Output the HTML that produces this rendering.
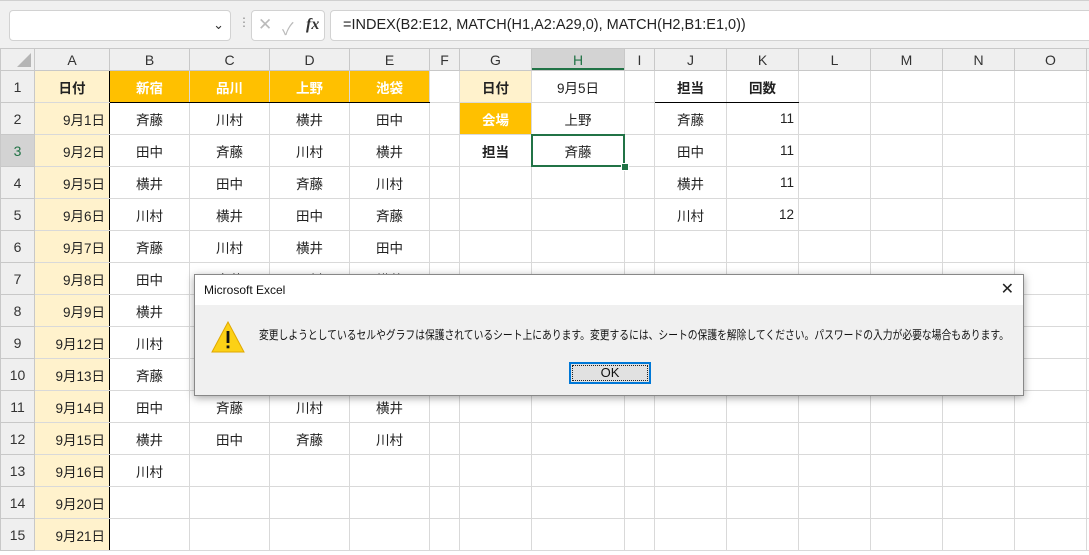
<!DOCTYPE html>
<html><head><meta charset="utf-8"><style>
body{margin:0;width:1089px;height:555px;overflow:hidden;background:#fff;font-family:"Liberation Sans","Noto Sans CJK JP",sans-serif;position:relative}
.top{position:absolute;left:0;top:0;width:1089px;height:48px;background:#f0f0f0;border-top:1px solid #d0d0d0;box-sizing:border-box}
.box{position:absolute;background:#fff;border:1px solid #d2d2d2;border-radius:4px;box-sizing:border-box}
table{position:absolute;left:0;top:48px;width:1106px;border-collapse:collapse;table-layout:fixed;font-size:13.5px;color:#222}
td{border:1px solid #d9d9d9;height:31px;padding:0 4px;text-align:center;white-space:nowrap;overflow:hidden}
tr.h td{height:21px;background:#efefef;color:#333;font-size:14px;border-color:#c8c8c8}
td.r{background:#efefef;color:#333;border-color:#c8c8c8;text-align:center;padding:0;font-size:14px}
.a{background:#fff2cc;text-align:right;padding-right:4px;border-right:1px solid #000}
.o{background:#ffc000;color:#fff;font-weight:bold}
.b{font-weight:bold}
.bb{border-bottom:1px solid #000}
.n{text-align:right}
.dlg{position:absolute;left:194px;top:274px;width:830px;height:122px;background:#f0f0f0;border:1px solid #888;box-shadow:0 2px 8px rgba(0,0,0,.35);box-sizing:border-box;font-size:12px}
</style></head><body>
<div class="top">
<div class="box" style="left:9px;top:9px;width:222px;height:31px"><span style="position:absolute;right:6px;top:6px;font-size:13px;color:#333">&#8964;</span></div>
<div style="position:absolute;left:238px;top:14px;color:#888;font-size:12px">&#8942;</div>
<div class="box" style="left:251px;top:9px;width:74px;height:31px;color:#bbb;font-size:17px"><span style="position:absolute;left:6px;top:4px">&#10005;</span><span style="position:absolute;left:30px;top:4px">&#10003;</span><i style="position:absolute;left:54px;top:5px;color:#333;font-family:'Liberation Serif',serif;font-weight:bold;font-size:16px">fx</i></div>
<div class="box" style="left:330px;top:9px;width:770px;height:31px;border-radius:4px 0 0 4px"><span style="position:absolute;left:12px;top:6px;font-size:14.5px;color:#222">=INDEX(B2:E12, MATCH(H1,A2:A29,0), MATCH(H2,B1:E1,0))</span></div>
</div>
<table>
<colgroup><col style="width:34px"><col style="width:75px"><col style="width:80px"><col style="width:80px"><col style="width:80px"><col style="width:80px"><col style="width:30px"><col style="width:72px"><col style="width:93px"><col style="width:30px"><col style="width:72px"><col style="width:72px"><col style="width:72px"><col style="width:72px"><col style="width:72px"><col style="width:72px"><col style="width:20px"></colgroup>
<tr class="h"><td style="position:relative"><span style="position:absolute;right:3px;bottom:3px;width:0;height:0;border-left:14px solid transparent;border-bottom:14px solid #b5b5b5"></span></td><td>A</td><td>B</td><td>C</td><td>D</td><td>E</td><td>F</td><td>G</td><td style="background:#d3d3d3;box-shadow:inset 0 -2px 0 #217346;color:#217346">H</td><td>I</td><td>J</td><td>K</td><td>L</td><td>M</td><td>N</td><td>O</td><td></td></tr>
<tr><td class="r">1</td><td class="a b" style="text-align:center">日付</td><td class="o bb">新宿</td><td class="o bb">品川</td><td class="o bb">上野</td><td class="o bb">池袋</td><td></td><td class="b" style="background:#fff2cc">日付</td><td>9月5日</td><td></td><td class="b bb">担当</td><td class="b bb">回数</td><td></td><td></td><td></td><td></td><td></td></tr>
<tr><td class="r">2</td><td class="a">9月1日</td><td>斉藤</td><td>川村</td><td>横井</td><td>田中</td><td></td><td class="o">会場</td><td>上野</td><td></td><td>斉藤</td><td class="n">11</td><td></td><td></td><td></td><td></td><td></td></tr>
<tr><td class="r" style="background:#d3d3d3;color:#217346">3</td><td class="a">9月2日</td><td>田中</td><td>斉藤</td><td>川村</td><td>横井</td><td></td><td class="b">担当</td><td>斉藤</td><td></td><td>田中</td><td class="n">11</td><td></td><td></td><td></td><td></td><td></td></tr>
<tr><td class="r">4</td><td class="a">9月5日</td><td>横井</td><td>田中</td><td>斉藤</td><td>川村</td><td></td><td></td><td></td><td></td><td>横井</td><td class="n">11</td><td></td><td></td><td></td><td></td><td></td></tr>
<tr><td class="r">5</td><td class="a">9月6日</td><td>川村</td><td>横井</td><td>田中</td><td>斉藤</td><td></td><td></td><td></td><td></td><td>川村</td><td class="n">12</td><td></td><td></td><td></td><td></td><td></td></tr>
<tr><td class="r">6</td><td class="a">9月7日</td><td>斉藤</td><td>川村</td><td>横井</td><td>田中</td><td></td><td></td><td></td><td></td><td></td><td></td><td></td><td></td><td></td><td></td><td></td></tr>
<tr><td class="r">7</td><td class="a">9月8日</td><td>田中</td><td>斉藤</td><td>川村</td><td>横井</td><td></td><td></td><td></td><td></td><td></td><td></td><td></td><td></td><td></td><td></td><td></td></tr>
<tr><td class="r">8</td><td class="a">9月9日</td><td>横井</td><td>田中</td><td>斉藤</td><td>川村</td><td></td><td></td><td></td><td></td><td></td><td></td><td></td><td></td><td></td><td></td><td></td></tr>
<tr><td class="r">9</td><td class="a">9月12日</td><td>川村</td><td>横井</td><td>田中</td><td>斉藤</td><td></td><td></td><td></td><td></td><td></td><td></td><td></td><td></td><td></td><td></td><td></td></tr>
<tr><td class="r">10</td><td class="a">9月13日</td><td>斉藤</td><td>川村</td><td>横井</td><td>田中</td><td></td><td></td><td></td><td></td><td></td><td></td><td></td><td></td><td></td><td></td><td></td></tr>
<tr><td class="r">11</td><td class="a">9月14日</td><td>田中</td><td>斉藤</td><td>川村</td><td>横井</td><td></td><td></td><td></td><td></td><td></td><td></td><td></td><td></td><td></td><td></td><td></td></tr>
<tr><td class="r">12</td><td class="a">9月15日</td><td>横井</td><td>田中</td><td>斉藤</td><td>川村</td><td></td><td></td><td></td><td></td><td></td><td></td><td></td><td></td><td></td><td></td><td></td></tr>
<tr><td class="r">13</td><td class="a">9月16日</td><td>川村</td><td></td><td></td><td></td><td></td><td></td><td></td><td></td><td></td><td></td><td></td><td></td><td></td><td></td><td></td></tr>
<tr><td class="r">14</td><td class="a">9月20日</td><td></td><td></td><td></td><td></td><td></td><td></td><td></td><td></td><td></td><td></td><td></td><td></td><td></td><td></td><td></td></tr>
<tr><td class="r">15</td><td class="a">9月21日</td><td></td><td></td><td></td><td></td><td></td><td></td><td></td><td></td><td></td><td></td><td></td><td></td><td></td><td></td><td></td></tr>
</table>
<div style="position:absolute;left:531px;top:134px;width:94px;height:33px;box-sizing:border-box;border:2px solid #217346"></div>
<div style="position:absolute;left:621px;top:163px;width:6px;height:6px;background:#217346;border:1px solid #fff"></div>
<div class="dlg">
<div style="position:absolute;left:0;top:0;right:0;height:30px;background:#fff"><span style="position:absolute;left:9px;top:8px;color:#111">Microsoft Excel</span><span style="position:absolute;right:9px;top:4px;font-size:16px;color:#222">&#10005;</span></div>
<svg style="position:absolute;left:16px;top:46px" width="34" height="32" viewBox="0 0 34 32"><path d="M17 1 L33 31 L1 31 Z" fill="#fcd116" stroke="#e0a800" stroke-width="1"/><rect x="15.6" y="10" width="2.8" height="12" fill="#111"/><rect x="15.6" y="24.5" width="2.8" height="2.8" fill="#111"/></svg>
<div style="position:absolute;left:64px;top:51px;color:#111;white-space:nowrap;transform:scaleX(0.815);transform-origin:0 0">変更しようとしているセルやグラフは保護されているシート上にあります。変更するには、シートの保護を解除してください。パスワードの入力が必要な場合もあります。</div>
<div style="position:absolute;left:374px;top:87px;width:82px;height:22px;box-sizing:border-box;border:2px solid #0078d7;background:#e1e1e1;text-align:center;line-height:18px;color:#111;font-size:13px"><div style="position:absolute;inset:1px;border:1px dotted #222"></div>OK</div>
</div>
</body></html>
